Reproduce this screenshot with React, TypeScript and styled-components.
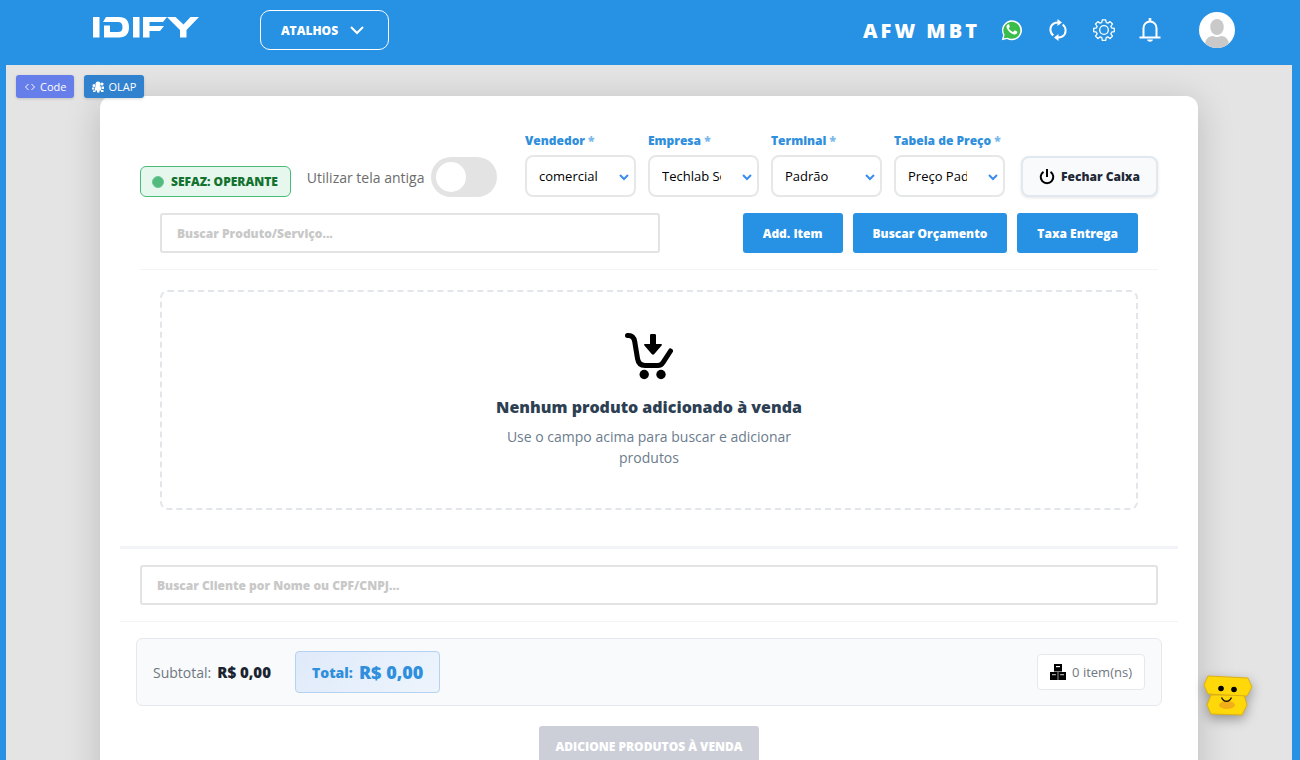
import React from "react";
import styled, { createGlobalStyle } from "styled-components";

const blue = "#2791e4";

const GlobalStyle = createGlobalStyle`
  *, *::before, *::after { box-sizing: border-box; }
  body {
    margin: 0;
    background: #e4e4e4;
    font-family: "Open Sans", "Noto Sans", sans-serif;
    color: #1f2933;
  }
  button, input, select { font-family: inherit; }
`;

const Page = styled.div`
  min-height: 100vh;
  border-left: 6px solid ${blue};
  border-right: 8px solid ${blue};
  background: #e4e4e4;
  overflow: hidden;
`;

const TopBar = styled.header`
  display: flex;
  align-items: center;
  height: 65px;
  padding: 0 57px 5px 87px;
  background: ${blue};
`;

const LogoLink = styled.a`
  display: flex;
  margin: 0 60px 6px 0;
`;

const ShortcutsButton = styled.button`
  display: flex;
  align-items: center;
  justify-content: center;
  gap: 12px;
  width: 129px;
  height: 40px;
  padding: 0 8px 0 4px;
  border: 1px solid #fff;
  border-radius: 10px;
  background: transparent;
  color: #fff;
  font-size: 12px;
  font-weight: 800;
`;

const TopActions = styled.div`
  display: flex;
  align-items: center;
  margin-left: auto;
`;

const CompanyName = styled.strong`
  margin-right: 20px;
  color: #fff;
  font-size: 20px;
  font-weight: 800;
  letter-spacing: 3px;
`;

const IconButton = styled.button`
  display: flex;
  justify-content: center;
  width: 24px;
  margin-right: 22px;
  padding: 0;
  border: 0;
  background: transparent;
`;

const AvatarButton = styled(IconButton)`
  width: 36px;
  margin: 0 0 0 15px;
`;

const Tags = styled.div`
  position: absolute;
  top: 75px;
  left: 16px;
  display: flex;
  gap: 10px;
`;

const Tag = styled.button<{ $color: string }>`
  display: flex;
  align-items: center;
  gap: 4px;
  height: 23px;
  padding: 0 8px;
  border: 0;
  border-radius: 3px;
  background: ${(p) => p.$color};
  box-shadow: 0 1px 3px rgba(0, 0, 0, 0.15);
  color: #fff;
  font-size: 11px;
`;

const Card = styled.main`
  margin: 31px 94px 0;
  padding: 34px 20px 40px;
  border-radius: 12px;
  background: #fff;
  box-shadow: 0 6px 36px rgba(0, 0, 0, 0.18);
`;

const Controls = styled.div`
  display: flex;
  align-items: flex-end;
  padding: 0 20px;
`;

const Status = styled.div`
  display: flex;
  align-items: center;
  gap: 7px;
  height: 31px;
  margin-right: 16px;
  padding: 0 12px 0 11px;
  border: 1px solid #48bb78;
  border-radius: 6px;
  background: #e6f7ee;
  color: #14722f;
  font-size: 12px;
  font-weight: 800;
  white-space: nowrap;
`;

const StatusDot = styled.span`
  width: 12px;
  height: 12px;
  border: 1px solid #6cc894;
  border-radius: 50%;
  background: #52ba7d;
`;

const ToggleLabel = styled.label`
  display: flex;
  align-items: center;
  gap: 7px;
  height: 40px;
  margin-right: auto;
  color: #6c6c6c;
  font-size: 14px;
  white-space: nowrap;
`;

const Toggle = styled.input`
  display: flex;
  align-items: center;
  appearance: none;
  width: 66px;
  height: 40px;
  margin: 0;
  padding: 5px;
  border-radius: 20px;
  background: #e3e3e3;

  &::before {
    content: "";
    width: 30px;
    height: 30px;
    border-radius: 50%;
    background: #fff;
  }
  &:checked {
    background: ${blue};
    justify-content: flex-end;
  }
`;

const Fields = styled.div`
  display: flex;
  gap: 12px;
`;

const Field = styled.div`
  display: flex;
  flex-direction: column;
  gap: 3px;
  width: 111px;
`;

const FieldLabel = styled.label`
  color: #2f8fdc;
  font-size: 12px;
  font-weight: 800;
  line-height: 22px;
  white-space: nowrap;

  span { color: #7ab8ea; }
`;

const SelectFrame = styled.div`
  display: flex;
  align-items: center;
  position: relative;

  svg {
    position: absolute;
    right: 7px;
    top: 17px;
    pointer-events: none;
  }
`;

const Select = styled.select`
  appearance: none;
  width: 100%;
  height: 42px;
  padding: 0 36px 0 12px;
  border: 2px solid #e5e7e9;
  border-radius: 8px;
  background: #fff;
  color: #000;
  font-size: 13px;
`;

const CloseButton = styled.button`
  display: flex;
  align-items: center;
  justify-content: center;
  gap: 6px;
  width: 137px;
  height: 41px;
  margin-left: 16px;
  padding: 0;
  border: 2px solid #e2e8f0;
  border-radius: 8px;
  background: #f8fafc;
  box-shadow: 0 1px 3px rgba(0, 0, 0, 0.1);
  color: #1f2937;
  font-size: 12px;
  font-weight: 800;
  white-space: nowrap;
`;

const SearchRow = styled.div`
  display: flex;
  align-items: center;
  gap: 10px;
  margin: 0 20px;
  padding: 16px 20px;
  border-bottom: 1px solid #f3f4f5;
`;

const SearchInput = styled.input`
  width: 100%;
  height: 40px;
  padding: 0 15px;
  border: 2px solid #e3e3e3;
  border-radius: 3px;
  background: #fff;
  color: #333;
  font-size: 12px;
  font-weight: 800;

  &::placeholder { color: #c8c8c8; opacity: 1; }
`;

const ProductSearch = styled(SearchInput)`
  flex: 0 1 500px;
  min-width: 0;
  margin-right: auto;
`;

const ActionButton = styled.button`
  height: 40px;
  padding: 0 20px;
  border: 0;
  border-radius: 3px;
  background: ${blue};
  color: #fff;
  font-size: 12px;
  font-weight: 800;
  white-space: nowrap;
`;

const EmptyState = styled.section`
  display: flex;
  flex-direction: column;
  align-items: center;
  margin: 20px 40px 36px;
  padding: 40px 20px;
  border: 2px dashed #e2e5e9;
  border-radius: 8px;
  text-align: center;
`;

const EmptyTitle = styled.h2`
  margin: 16px 0 7px;
  color: #2d3f53;
  font-size: 16px;
  font-weight: 800;
  line-height: 23px;
`;

const EmptyText = styled.p`
  max-width: 300px;
  margin: 0;
  color: #6b7c8d;
  font-size: 14px;
  line-height: 21px;
`;

const CustomerRow = styled.div`
  padding: 16px 20px;
  border-top: 3px solid #f1f3f6;
  border-bottom: 1px solid #f1f3f4;
`;

const Summary = styled.div`
  display: flex;
  align-items: center;
  height: 68px;
  margin: 16px 16px 20px;
  padding: 0 16px;
  border: 1px solid #e5e9ef;
  border-radius: 6px;
  background: #f8fafc;
`;

const Subtotal = styled.div`
  display: flex;
  align-items: center;
  gap: 6px;
  margin-right: 24px;
  color: #6f7780;
  font-size: 14px;

  strong { color: #1a2430; font-size: 15px; font-weight: 800; }
`;

const Total = styled.div`
  display: flex;
  align-items: center;
  gap: 6px;
  height: 42px;
  padding: 0 16px;
  border: 1px solid #b5d2f0;
  border-radius: 4px;
  background: linear-gradient(135deg, #dfeafa, #edf4fc);
  color: #2f8fdc;
  font-size: 14px;
  font-weight: 800;

  strong { font-size: 18px; font-weight: 800; }
`;

const ItemCount = styled.div`
  display: flex;
  align-items: center;
  gap: 6px;
  height: 36px;
  margin-left: auto;
  padding: 0 12px;
  border: 1px solid #e5e9ef;
  border-radius: 4px;
  background: #fff;
  color: #6f7780;
  font-size: 13px;
`;

const SubmitButton = styled.button`
  display: block;
  width: 220px;
  height: 40px;
  margin: 0 auto;
  border: 0;
  border-radius: 3px;
  background: #cdcfd8;
  color: #fff;
  font-size: 12px;
  font-weight: 800;
  white-space: nowrap;
`;

const AssistantButton = styled.button`
  position: fixed;
  right: 47px;
  bottom: 43px;
  display: flex;
  padding: 0;
  border: 0;
  background: transparent;
  filter: drop-shadow(0 4px 6px rgba(0, 0, 0, 0.35));
`;

const Logo = () => (
  <svg width="107" height="23" viewBox="0 0 107 23" fill="#fff" aria-hidden="true">
    <path d="M0 1h6.500v20.500H0z" />
    <path d="M13 1h13c7 0 10 4 10 10.200S33 21.500 26 21.500H11V9.500h6V16h8c3 0 4.500-1.500 4.500-4.800S28 6 25 6H10z" />
    <path d="M40 1h6.500v20.500H40z" />
    <path d="M50 1h24l-4 5H56.500v4H71l-4 5H56.500v6.500H50z" />
    <path d="M74 1h8.500l8 7.500L97.500 1h8.500L93.500 14v7.500H87V14z" />
  </svg>
);

const WhatsApp = () => (
  <svg width="22" height="22" viewBox="0 0 22 22" aria-hidden="true">
    <path d="M.8 21.200 2.200 16A10 10 0 1 1 6 19.900z" fill="#fff" />
    <path d="m2.700 19.300.9-3.500a8.500 8.500 0 1 1 3 2.900z" fill="#3bbd4b" />
    <path d="M8.300 5.800c-.3-.6-.5-.6-.9-.6-1 .1-1.900 1-1.900 2.400 0 3 4.300 7.900 8.200 7.900 1.500 0 2.600-1 2.600-2.500 0-.3-.2-.4-2.300-1.400-.5-.2-.6-.1-.8.100l-.9 1.100c-.3.300-.5.200-.9 0-1.600-.7-2.800-1.900-3.500-3.200-.2-.4 0-.5.2-.8.600-.7.800-1 .6-1.400z" fill="#fff" />
  </svg>
);

const Refresh = () => (
  <svg width="18" height="22" viewBox="0 0 18 22" aria-hidden="true">
    <g fill="none" stroke="#fff" strokeWidth="2">
      <path d="M4.300 16.500C.2 13.200.6 7 4.500 4.600 6 3.700 7.500 3.500 9.500 3.500" />
      <path d="M13.700 5.500c4.100 3.300 3.700 9.500-.2 11.900-1.500.9-3 1.100-5 1.100" />
    </g>
    <path d="M8.500 0 13 3.500 8.500 7zM9.500 22 5 18.500 9.500 15z" fill="#fff" />
  </svg>
);

const Gear = () => (
  <svg width="22" height="22" viewBox="0 0 22 22" fill="none" stroke="#fff" strokeWidth="1.300" strokeLinejoin="round" aria-hidden="true">
    <circle cx="11" cy="11" r="4.300" />
    <path d="M9.300.8h3.400l.5 2.700 1.600.7 2.300-1.600 2.400 2.400-1.600 2.300.7 1.600 2.700.5v3.300l-2.700.5-.7 1.600 1.600 2.300-2.400 2.400-2.300-1.600-1.600.7-.5 2.700H9.300l-.5-2.700-1.600-.7-2.300 1.600-2.400-2.400 1.600-2.300-.7-1.600-2.700-.5V9.400l2.700-.5.7-1.600L2.500 5l2.400-2.400 2.300 1.600 1.600-.7z" />
  </svg>
);

const Bell = () => (
  <svg width="22" height="24" viewBox="0 0 22 24" aria-hidden="true">
    <path d="M4.500 19.500V10a6.500 6.500 0 0 1 13 0v9.500" fill="none" stroke="#fff" strokeWidth="2" />
    <path d="M9.700 0h2.600v4H9.700zM.5 18.500h21v2H.5zM8 21.500h6c-.5 3-5.500 3-6 0z" fill="#fff" />
  </svg>
);

const Avatar = () => (
  <svg width="36" height="36" viewBox="0 0 36 36" aria-hidden="true">
    <clipPath id="avatar-clip"><circle cx="18" cy="18" r="18" /></clipPath>
    <g clipPath="url(#avatar-clip)">
      <path d="M0 0h36v36H0z" fill="#fff" />
      <ellipse cx="18" cy="15" rx="6.800" ry="8" fill="#c9c9c9" />
      <path d="M6 33c0-6 4-9 8-9 2.500 1.300 5.500 1.300 8 0 4 0 8 3 8 9v3H6z" fill="#c9c9c9" />
    </g>
  </svg>
);

const MenuChevron = () => (
  <svg width="14" height="9" viewBox="0 0 14 9" fill="none" stroke="#fff" strokeWidth="2" aria-hidden="true">
    <path d="m1 1 6 6 6-6" />
  </svg>
);

const SelectChevron = () => (
  <svg width="10" height="9" viewBox="0 0 10 9" fill="none" stroke="#3b8cf0" strokeWidth="2" aria-hidden="true">
    <path d="m1 3 4 4 4-4" />
  </svg>
);

const CodeIcon = () => (
  <svg width="12" height="10" viewBox="0 0 12 10" fill="none" stroke="#fff" strokeWidth="1" aria-hidden="true">
    <path d="M4.500 2 1.500 5l3 3M7.500 2l3 3-3 3" />
  </svg>
);

const OlapIcon = () => (
  <svg width="12" height="12" viewBox="0 0 12 12" fill="#fff" aria-hidden="true">
    <circle cx="6" cy="3" r="2.500" />
    <circle cx="2" cy="4.500" r="1.500" />
    <circle cx="10" cy="3" r="1.600" />
    <path d="M3.500 5h5l1 4.500h-7zM0 6.500h2.500L2 8.500H0zM9.500 5.500H12v2.500H9.500zM1 9.500h2.500V11H1zM5 9h2.500v2.500H5zM9 9h2.500v2H9z" />
  </svg>
);

const Power = () => (
  <svg width="16" height="16" viewBox="0 0 16 16" fill="none" stroke="#000" strokeWidth="2" aria-hidden="true">
    <path d="M4.500 2.800a6.300 6.300 0 1 0 7 0M8 0v8" />
  </svg>
);

const Cart = () => (
  <svg width="48" height="48" viewBox="0 0 48 48" aria-hidden="true">
    <path d="M2.500 3.500h1c4 0 5.500 2 6.200 6l2.800 17c.8 5 3 7 7.500 7h13c2.500 0 3.500-.5 4.800-2.700L45.500 19" fill="none" stroke="#000" strokeWidth="5" strokeLinecap="round" strokeLinejoin="round" />
    <path d="M26.500 2h3c1 0 1.500.5 1.500 1.500V12h5c1 0 1.300.8.600 1.500l-7.300 8.600c-.8.900-1.800.9-2.600 0l-7.300-8.600c-.7-.7-.4-1.500.6-1.500h5V3.500c0-1 .5-1.500 1.500-1.500z" />
    <circle cx="19.200" cy="42.500" r="4.700" />
    <circle cx="36" cy="42.500" r="4.700" />
  </svg>
);

const Boxes = () => (
  <svg width="16" height="16" viewBox="0 0 16 16" aria-hidden="true">
    <path d="M4 0h8v7.500H4zM0 8h7.700v8H0zM8.300 8H16v8H8.300z" />
    <path d="M6 2h4v1.200H6z" fill="#fff" />
    <path d="M2 10h3.800v1.200H2zM10.200 10H14v1.200h-3.800z" fill="#aaa" />
  </svg>
);

const Mascot = () => (
  <svg width="50" height="42" viewBox="0 0 50 42" aria-hidden="true">
    <g fill="#ffd80a" stroke="#dcae12" strokeLinejoin="round">
      <path d="M8 20h33l3 10-5 10-31-1-4-9z" />
      <path d="m5 1 40 2 4 9-5 9L5 19 1 10z" />
    </g>
    <ellipse cx="24" cy="30" rx="8" ry="4" fill="#f2ae18" />
    <path d="M18.500 22.500c2.500 5 7.500 5 10 0" fill="none" stroke="#1a1200" strokeWidth="1.500" />
    <circle cx="18" cy="13.500" r="2.800" />
    <circle cx="31" cy="14.500" r="2.800" />
  </svg>
);

const fields = [
  { id: "vendedor", label: "Vendedor", value: "comercial" },
  { id: "empresa", label: "Empresa", value: "Techlab Soluções" },
  { id: "terminal", label: "Terminal", value: "Padrão" },
  { id: "tabela", label: "Tabela de Preço", value: "Preço Padrão" },
];

export default function App() {
  return (
    <Page>
      <GlobalStyle />
      <TopBar>
        <LogoLink href="#" aria-label="IDIFY"><Logo /></LogoLink>
        <ShortcutsButton type="button">
          ATALHOS
          <MenuChevron />
        </ShortcutsButton>
        <TopActions>
          <CompanyName>AFW MBT</CompanyName>
          <IconButton type="button" aria-label="WhatsApp"><WhatsApp /></IconButton>
          <IconButton type="button" aria-label="Atualizar"><Refresh /></IconButton>
          <IconButton type="button" aria-label="Configurações"><Gear /></IconButton>
          <IconButton type="button" aria-label="Notificações"><Bell /></IconButton>
          <AvatarButton type="button" aria-label="Perfil"><Avatar /></AvatarButton>
        </TopActions>
      </TopBar>

      <Tags>
        <Tag type="button" $color="#667eea"><CodeIcon />Code</Tag>
        <Tag type="button" $color="#3182ce"><OlapIcon />OLAP</Tag>
      </Tags>

      <Card>
        <Controls>
          <Status><StatusDot />SEFAZ: OPERANTE</Status>
          <ToggleLabel>
            Utilizar tela antiga
            <Toggle type="checkbox" />
          </ToggleLabel>
          <Fields>
            {fields.map((field) => (
              <Field key={field.id}>
                <FieldLabel htmlFor={field.id}>{field.label} <span>*</span></FieldLabel>
                <SelectFrame>
                  <Select id={field.id}>
                    <option>{field.value}</option>
                  </Select>
                  <SelectChevron />
                </SelectFrame>
              </Field>
            ))}
          </Fields>
          <CloseButton type="button"><Power />Fechar Caixa</CloseButton>
        </Controls>

        <SearchRow>
          <ProductSearch aria-label="Buscar Produto/Serviço" placeholder="Buscar Produto/Serviço..." />
          <ActionButton type="button">Add. Item</ActionButton>
          <ActionButton type="button">Buscar Orçamento</ActionButton>
          <ActionButton type="button">Taxa Entrega</ActionButton>
        </SearchRow>

        <EmptyState>
          <Cart />
          <EmptyTitle>Nenhum produto adicionado à venda</EmptyTitle>
          <EmptyText>Use o campo acima para buscar e adicionar produtos</EmptyText>
        </EmptyState>

        <CustomerRow>
          <SearchInput aria-label="Buscar Cliente" placeholder="Buscar Cliente por Nome ou CPF/CNPJ..." />
        </CustomerRow>

        <Summary>
          <Subtotal>Subtotal: <strong>R$ 0,00</strong></Subtotal>
          <Total>Total: <strong>R$ 0,00</strong></Total>
          <ItemCount><Boxes />0 item(ns)</ItemCount>
        </Summary>

        <SubmitButton type="button">ADICIONE PRODUTOS À VENDA</SubmitButton>
      </Card>

      <AssistantButton type="button" aria-label="Assistente"><Mascot /></AssistantButton>
    </Page>
  );
}
